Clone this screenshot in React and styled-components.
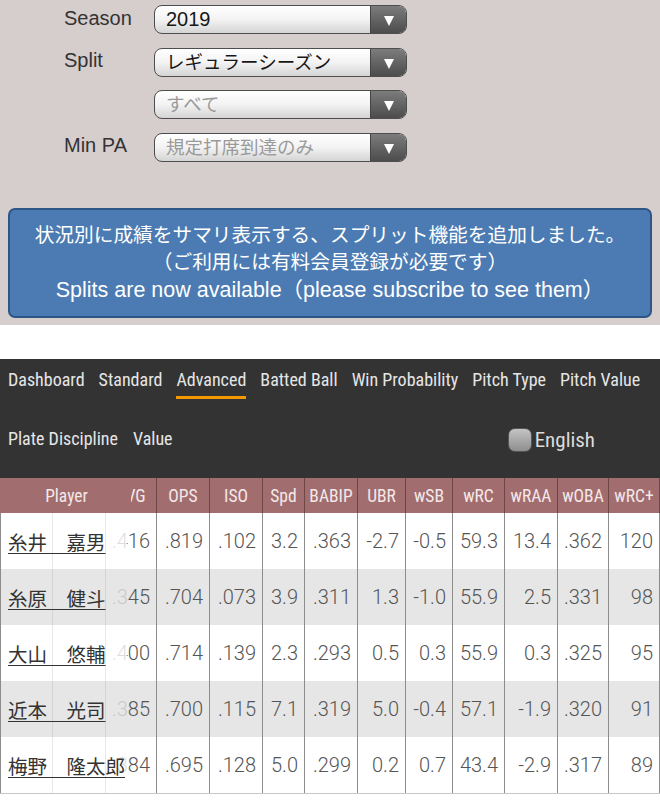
import React from 'react';
import styled, { createGlobalStyle } from 'styled-components';

const COND = `"Roboto Condensed", "DejaVu Sans Condensed", "Liberation Sans Narrow", "Noto Sans", sans-serif`;
const JP = `"Liberation Sans", "Noto Sans CJK JP", sans-serif`;
const COLS = '53px 53px 51px 53px 53px 42px 53px 48px 47px 52px 53px 51px 51px';

const GlobalStyle = createGlobalStyle`
  html, body {
    margin: 0;
    padding: 0;
    background: #fff;
  }
  body {
    font-family: ${JP};
    width: 660px;
    overflow: hidden;
  }
`;

const FilterPanel = styled.section`
  background: #d6cdcd;
  padding: 5px 8px 7px;
`;

const FilterGrid = styled.div`
  display: grid;
  grid-template-columns: 146px 253px;
  row-gap: 13.5px;
`;

const Label = styled.div`
  padding-left: 56px;
  font-size: 20px;
  color: #333;
  align-self: center;
  padding-bottom: 3px;
`;

const Select = styled.div`
  display: flex;
  height: 29px;
  box-sizing: border-box;
  border: 1.5px solid #4e4e4e;
  border-radius: 8px;
  overflow: hidden;
  background: linear-gradient(#ffffff, #f3f3f3 50%, #d4d4d4);
`;

const SelectValue = styled.span`
  flex: 1;
  padding-left: 11px;
  line-height: 27px;
  font-size: ${(p) => (p.$jp ? '18.5px' : '20px')};
  color: ${(p) => (p.$muted ? '#9a9a9a' : '#161616')};
  white-space: nowrap;
`;

const SelectArrow = styled.span`
  width: 35px;
  display: flex;
  align-items: center;
  justify-content: center;
  background: linear-gradient(#7c7c7c, #4c4c4c);
  border-left: 1px solid #444;

  &::after {
    content: '';
    margin-top: 3px;
    border-left: 5.5px solid transparent;
    border-right: 5.5px solid transparent;
    border-top: 10px solid #fff;
  }
`;

const Notice = styled.div`
  margin-top: 46px;
  background: #4b7bb2;
  border: 2px solid #2d5687;
  border-radius: 7px;
  padding: 12px 0;
  color: #fff;
  text-align: center;
  font-size: 19.7px;
  line-height: 27.5px;
`;

const NoticeLatin = styled.span`
  font-size: 21.5px;
`;

const Nav = styled.nav`
  margin-top: 34px;
  background: #333;
  height: 119px;
  padding: 0 8px;
  font-family: ${COND};
  color: #e6e6e6;
`;

const TabRow = styled.div`
  display: flex;
  gap: 14px;
  white-space: nowrap;
`;

const Tab = styled.span`
  padding: 10px 0 5px;
  line-height: 22px;
  font-size: 18px;
  border-bottom: 3px solid ${(p) => (p.$active ? '#f39800' : 'transparent')};
`;

const SubRow = styled.div`
  display: flex;
  align-items: center;
  gap: 15px;
  height: 78px;
  font-size: 18px;
`;

const LangToggle = styled.label`
  margin-left: auto;
  margin-right: 57px;
  display: flex;
  align-items: center;
  gap: 3px;
  font-size: 21px;
  color: #dcdcdc;
  padding-top: 3px;
`;

const Check = styled.span`
  width: 24px;
  height: 24px;
  box-sizing: border-box;
  border-radius: 7px;
  border: 1.5px solid #555;
  background: linear-gradient(#c4c4c4, #8e8e8e);
`;

const HeadRow = styled.div`
  position: relative;
  display: grid;
  grid-template-columns: ${COLS};
  height: 35px;
  background: #a26d6f;
`;

const HeadCell = styled.div`
  border-right: 1px solid #6f4646;
  color: #f4e8e8;
  font-family: ${COND};
  font-size: 17.5px;
  display: flex;
  align-items: center;
  justify-content: center;
`;

const PlayerHead = styled.div`
  position: absolute;
  left: 0;
  top: 0;
  bottom: 0;
  width: 131px;
  padding-left: 2px;
  box-sizing: border-box;
  background: #a26d6f;
  color: #f4e8e8;
  font-family: ${COND};
  font-size: 17.5px;
  display: flex;
  align-items: center;
  justify-content: center;
`;

const BodyRow = styled.div`
  position: relative;
  display: grid;
  grid-template-columns: ${COLS};
  height: 56px;
  background: ${(p) => (p.$alt ? '#e6e6e6' : '#fff')};
  &:last-child {
    border-bottom: 1px solid #c8c8c8;
  }
`;

const Cell = styled.div`
  border-right: 1px solid #8c8c8c;
  padding-right: 6px;
  font-family: Roboto, sans-serif;
  font-weight: 300;
  font-size: 20px;
  color: #555;
  display: flex;
  align-items: center;
  justify-content: flex-end;
`;

const PlayerCell = styled.div`
  position: absolute;
  left: 0;
  top: 0;
  bottom: 0;
  width: 127px;
  box-sizing: border-box;
  border-left: 1px solid #8c8c8c;
  padding-left: 7px;
  background: ${(p) => (p.$alt ? 'rgba(230,230,230,0.8)' : 'rgba(255,255,255,0.8)')};
  display: flex;
  align-items: center;
  white-space: nowrap;
`;

const PlayerLink = styled.a`
  font-family: "Noto Sans CJK JP", sans-serif;
  font-size: 19.5px;
  color: #333;
  text-decoration: underline;
  text-underline-offset: 3px;
`;

const filters = [
  { label: 'Season', value: '2019' },
  { label: 'Split', value: 'レギュラーシーズン', jp: true },
  { label: '', value: 'すべて', jp: true, muted: true },
  { label: 'Min PA', value: '規定打席到達のみ', jp: true, muted: true },
];

const tabs = ['Dashboard', 'Standard', 'Advanced', 'Batted Ball', 'Win Probability', 'Pitch Type', 'Pitch Value'];

// first two columns (# / Team) sit under the frozen Player column
const headers = ['', '', 'AVG', 'OPS', 'ISO', 'Spd', 'BABIP', 'UBR', 'wSB', 'wRC', 'wRAA', 'wOBA', 'wRC+'];

const rows = [
  ['糸井　嘉男', '.416', '.819', '.102', '3.2', '.363', '-2.7', '-0.5', '59.3', '13.4', '.362', '120'],
  ['糸原　健斗', '.345', '.704', '.073', '3.9', '.311', '1.3', '-1.0', '55.9', '2.5', '.331', '98'],
  ['大山　悠輔', '.400', '.714', '.139', '2.3', '.293', '0.5', '0.3', '55.9', '0.3', '.325', '95'],
  ['近本　光司', '.385', '.700', '.115', '7.1', '.319', '5.0', '-0.4', '57.1', '-1.9', '.320', '91'],
  ['梅野　隆太郎', '.384', '.695', '.128', '5.0', '.299', '0.2', '0.7', '43.4', '-2.9', '.317', '89'],
];

export default function App() {
  return (
    <>
      <GlobalStyle />
      <FilterPanel>
        <FilterGrid>
          {filters.map((f, i) => (
            <React.Fragment key={i}>
              <Label>{f.label}</Label>
              <Select>
                <SelectValue $jp={f.jp} $muted={f.muted}>{f.value}</SelectValue>
                <SelectArrow />
              </Select>
            </React.Fragment>
          ))}
        </FilterGrid>
        <Notice>
          状況別に成績をサマリ表示する、スプリット機能を追加しました。
          <br />
          （ご利用には有料会員登録が必要です）
          <br />
          <NoticeLatin>Splits are now available（please subscribe to see them）</NoticeLatin>
        </Notice>
      </FilterPanel>

      <Nav>
        <TabRow>
          {tabs.map((t) => (
            <Tab key={t} $active={t === 'Advanced'}>{t}</Tab>
          ))}
        </TabRow>
        <SubRow>
          <span>Plate Discipline</span>
          <span>Value</span>
          <LangToggle>
            <Check />
            English
          </LangToggle>
        </SubRow>
      </Nav>

      <div>
        <HeadRow>
          {headers.map((h, i) => (
            <HeadCell key={i}>{h}</HeadCell>
          ))}
          <PlayerHead>Player</PlayerHead>
        </HeadRow>
        {rows.map(([name, ...stats], i) => (
          <BodyRow key={name} $alt={i % 2 === 1}>
            <Cell />
            <Cell />
            {stats.map((s, j) => (
              <Cell key={j}>{s}</Cell>
            ))}
            <PlayerCell $alt={i % 2 === 1}>
              <PlayerLink>{name}</PlayerLink>
            </PlayerCell>
          </BodyRow>
        ))}
      </div>
    </>
  );
}
